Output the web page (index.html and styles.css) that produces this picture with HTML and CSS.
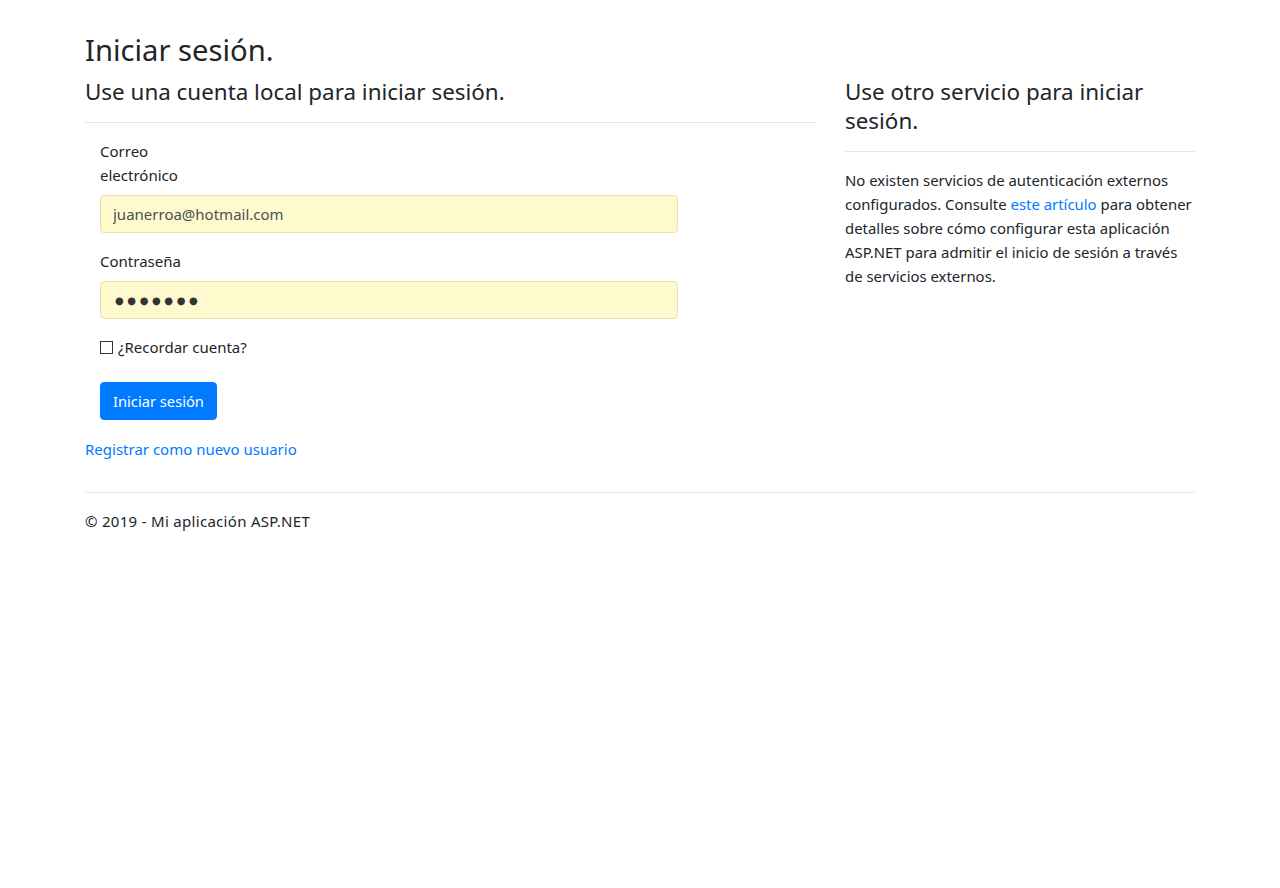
FILE: index.html
```html
<!DOCTYPE html>
<html lang="es">
<head>
<meta charset="utf-8">
<title>Iniciar sesión</title>
<link rel="stylesheet" href="styles.css">
</head>
<body>
<div class="container body-content">
  <h2 class="page-title">Iniciar sesión.</h2>
  <div class="row">
    <div class="col-8">
      <section id="loginForm">
        <form class="form-horizontal">
          <h4 class="section-title">Use una cuenta local para iniciar sesión.</h4>
          <hr class="rule">
          <div class="form-group">
            <label class="control-label" for="Email">Correo electrónico</label>
            <div class="field">
              <input class="form-control" id="Email" type="text" value="juanerroa@hotmail.com">
            </div>
          </div>
          <div class="form-group">
            <label class="control-label" for="Password">Contraseña</label>
            <div class="field">
              <input class="form-control pw" id="Password" type="text" value="●●●●●●●" aria-label="Contraseña">
            </div>
          </div>
          <div class="form-group">
            <div class="field">
              <div class="checkbox">
                <input type="checkbox" id="RememberMe" class="check">
                <label for="RememberMe">¿Recordar cuenta?</label>
              </div>
            </div>
          </div>
          <div class="form-group form-group-submit">
            <div class="field">
              <button type="button" class="btn btn-primary">Iniciar sesión</button>
            </div>
          </div>
          <p class="para"><a href="#" class="link">Registrar como nuevo usuario</a></p>
        </form>
      </section>
    </div>
    <div class="col-4">
      <section id="socialLoginForm">
        <h4 class="section-title">Use otro servicio para iniciar sesión.</h4>
        <hr class="rule">
        <p class="para ext-text">No existen servicios de autenticación externos configurados. Consulte <a href="#" class="link">este artículo</a> para obtener detalles sobre cómo configurar esta aplicación ASP.NET para admitir el inicio de sesión a través de servicios externos.</p>
      </section>
    </div>
  </div>
  <hr class="rule">
  <footer>
    <p class="para footer-text">© 2019 - Mi aplicación ASP.NET</p>
  </footer>
</div>
</body>
</html>
```
FILE: styles.css
```css
* { box-sizing: border-box; }

body {
  margin: 0;
  font-family: "Noto Sans", "Open Sans", sans-serif;
  font-size: 15px;
  line-height: 24px;
  color: #212529;
  background: #fff;
}

.container {
  width: 1140px;
  margin: 0 auto;
  padding: 31px 15px 0;
}

.page-title {
  margin: 0 0 8px;
  font-size: 29.2px;
  font-weight: 400;
  line-height: 38.4px;
}

.section-title {
  margin: 0 0 8px;
  font-size: 22.4px;
  font-weight: 400;
  line-height: 28.8px;
  padding-top: 1px;
}

.rule {
  margin: 15px 0 16px;
  border: 0;
  border-top: 1px solid rgba(0, 0, 0, 0.1);
  height: 0;
}

.row {
  display: flex;
  margin: 0 -15px;
}

.col-8 {
  flex: 0 0 66.6667%;
  max-width: 66.6667%;
  padding: 0 15px;
}

.col-4 {
  flex: 0 0 33.3333%;
  max-width: 33.3333%;
  padding: 0 15px;
}

.form-group {
  margin-bottom: 16px;
}

.form-group-submit {
  margin-bottom: 17px;
}

.control-label {
  display: block;
  max-width: 16.6667%;
  padding: 0 15px;
  margin-bottom: 8px;
}

.field {
  width: 100%;
  max-width: 83.3333%;
  padding: 0 15px;
}

.form-control {
  display: block;
  width: 100%;
  height: 38px;
  padding: 6px 12px;
  font-family: inherit;
  font-size: 15px;
  line-height: 24px;
  color: #495057;
  background: #fffacd;
  border: 1px solid #ecdfa8;
  border-radius: 4px;
  outline: none;
}

.pw {
  padding-left: 14px;
  font-family: "DejaVu Sans", sans-serif;
  font-size: 10px;
  letter-spacing: 3.6px;
  color: #333;
}

.checkbox {
  display: flex;
  align-items: center;
  gap: 5px;
  padding-bottom: 7px;
}

.check {
  appearance: none;
  -webkit-appearance: none;
  width: 13px;
  height: 13px;
  margin: 0;
  border: 1px solid #333;
  background: #fff;
  border-radius: 0;
}

.btn {
  display: inline-block;
  font-family: inherit;
  font-size: 14.7px;
  line-height: 24px;
  padding: 6px 12px;
  border: 1px solid transparent;
  border-radius: 4px;
  cursor: pointer;
}

.btn-primary {
  color: #fff;
  background: #007bff;
  border-color: #007bff;
}

.para {
  margin: 0 0 16px;
}

.link {
  color: #007bff;
  text-decoration: none;
}

.ext-text {
  font-size: 14.9px;
}

.footer-text {
  letter-spacing: 0.3px;
}
```
